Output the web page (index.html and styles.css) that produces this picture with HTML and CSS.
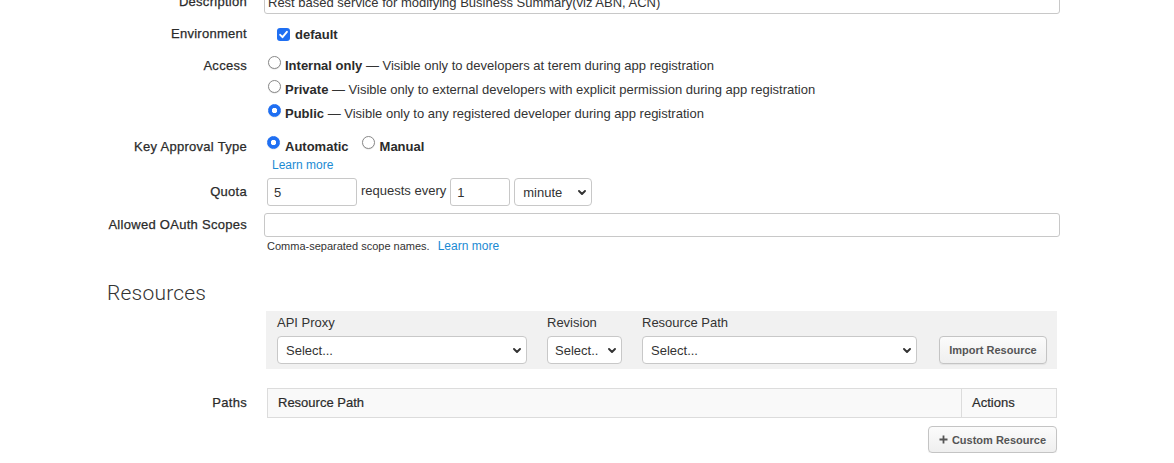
FILE: index.html
```html
<!DOCTYPE html>
<html lang="en">
<head>
<meta charset="utf-8">
<title>Product</title>
<link rel="stylesheet" href="styles.css">
</head>
<body>
<div class="page">
  <div class="field f-desc">
    <div class="label">Description</div>
    <div class="control">
      <input class="text text-wide desc" type="text" value="Rest based service for modifying Business Summary(viz ABN, ACN)">
    </div>
  </div>

  <div class="field f-env">
    <div class="label">Environment</div>
    <div class="control env">
      <span class="check"><svg width="13" height="13" viewBox="0 0 13 13"><path d="M3.2 6.8l2.3 2.4 4.4-5.4" fill="none" stroke="#fff" stroke-width="1.9" stroke-linecap="round" stroke-linejoin="round"/></svg></span>
      <span class="strong">default</span>
    </div>
  </div>

  <div class="field f-access">
    <div class="label">Access</div>
    <div class="control">
      <div class="option"><span class="radio"></span><span><span class="strong">Internal only</span> — Visible only to developers at terem during app registration</span></div>
      <div class="option"><span class="radio"></span><span><span class="strong">Private</span> — Visible only to external developers with explicit permission during app registration</span></div>
      <div class="option"><span class="radio on"></span><span><span class="strong">Public</span> — Visible only to any registered developer during app registration</span></div>
    </div>
  </div>

  <div class="field f-key">
    <div class="label">Key Approval Type</div>
    <div class="control">
      <div class="option-row">
        <div class="option"><span class="radio on"></span><span class="strong">Automatic</span></div>
        <div class="option manual"><span class="radio"></span><span class="strong">Manual</span></div>
      </div>
      <a class="link learn" href="#">Learn more</a>
    </div>
  </div>

  <div class="field f-quota">
    <div class="label">Quota</div>
    <div class="control quota">
      <input class="text q-count" type="text" value="5">
      <span class="q-text">requests every</span>
      <input class="text q-every" type="text" value="1">
      <div class="select q-unit"><span>minute</span><svg class="chev" width="8" height="5" viewBox="0 0 8 5"><path d="M1 1l3 3 3-3" fill="none" stroke="#333" stroke-width="1.9" stroke-linecap="round" stroke-linejoin="round"/></svg></div>
    </div>
  </div>

  <div class="field f-oauth">
    <div class="label">Allowed OAuth Scopes</div>
    <div class="control">
      <input class="text text-wide oauth" type="text" value="">
      <div class="help">Comma-separated scope names. <a class="link" href="#">Learn more</a></div>
    </div>
  </div>

  <h2 class="section-title">Resources</h2>

  <div class="panel">
    <div class="pcol c-proxy">
      <div class="plabel">API Proxy</div>
      <div class="select"><span>Select...</span><svg class="chev" width="8" height="5" viewBox="0 0 8 5"><path d="M1 1l3 3 3-3" fill="none" stroke="#333" stroke-width="1.9" stroke-linecap="round" stroke-linejoin="round"/></svg></div>
    </div>
    <div class="pcol c-rev">
      <div class="plabel">Revision</div>
      <div class="select"><span>Select..</span><svg class="chev" width="8" height="5" viewBox="0 0 8 5"><path d="M1 1l3 3 3-3" fill="none" stroke="#333" stroke-width="1.9" stroke-linecap="round" stroke-linejoin="round"/></svg></div>
    </div>
    <div class="pcol c-path">
      <div class="plabel">Resource Path</div>
      <div class="select"><span>Select...</span><svg class="chev" width="8" height="5" viewBox="0 0 8 5"><path d="M1 1l3 3 3-3" fill="none" stroke="#333" stroke-width="1.9" stroke-linecap="round" stroke-linejoin="round"/></svg></div>
    </div>
    <button class="btn import" type="button">Import Resource</button>
  </div>

  <div class="field f-paths">
    <div class="label">Paths</div>
    <div class="control">
      <div class="table">
        <div class="th th-path">Resource Path</div>
        <div class="th th-actions">Actions</div>
      </div>
      <div class="table-actions">
        <button class="btn custom" type="button"><svg width="9" height="9" viewBox="0 0 9 9"><path d="M4.5 0.5v8M0.5 4.5h8" stroke="#555" stroke-width="1.8"/></svg>Custom Resource</button>
      </div>
    </div>
  </div>
</div>
</body>
</html>
```
FILE: styles.css
```css
* { box-sizing: border-box; }

html, body {
  margin: 0;
  padding: 0;
  background: #fff;
  overflow: hidden;
}

body {
  font-family: "Liberation Sans", Arial, Helvetica, sans-serif;
  font-size: 13px;
  color: #333;
}

.page {
  width: 960px;
  margin: -10px 0 0 100px;
}

.field {
  display: flex;
  align-items: flex-start;
}

.label {
  flex: none;
  width: 164px;
  padding-right: 17px;
  text-align: right;
  line-height: 24px;
  color: #2b2b2b;
  letter-spacing: 0.28px;
  -webkit-text-stroke: 0.25px #2b2b2b;
}

.control {
  flex: 1;
  min-width: 0;
}

.strong {
  font-weight: bold;
  color: #2b2b2b;
}

.text {
  display: block;
  font-family: inherit;
  font-size: 13px;
  color: #333;
  background: #fff;
  border: 1px solid #c8c8c8;
  border-radius: 3px;
  outline: none;
  margin: 0;
}

.text-wide {
  width: 796px;
  height: 24px;
  padding: 0 3px;
}

/* rows */
.f-env { margin-top: 8px; }
.f-access { margin-top: 8px; }
.f-key { margin-top: 9px; }
.f-quota { margin-top: 5px; }
.f-quota .label { line-height: 28px; }
.f-oauth { margin-top: 7px; }
.f-paths { margin-top: 19px; }
.f-paths .label { line-height: 30px; }

.env {
  display: flex;
  align-items: center;
  height: 24px;
}

.check {
  display: flex;
  width: 13px;
  height: 13px;
  margin-left: 13px;
  margin-right: 5px;
  background: #1f6ff2;
  border-radius: 3px;
}

.option {
  display: flex;
  align-items: flex-start;
  line-height: 24px;
}

.radio {
  flex: none;
  width: 13px;
  height: 13px;
  margin: 2px 4px 0 4px;
  border-radius: 50%;
  border: 1px solid #8a8a8a;
  background: #fff;
  box-shadow: 0 0.5px 1px rgba(0, 0, 0, 0.15);
}

.radio.on {
  border-color: #1f6ff2;
  background: radial-gradient(circle, #fff 0 2.4px, #1f6ff2 3px);
}

.f-key .radio { margin-top: 1px; }
.f-key .radio.on { margin-left: 3px; margin-right: 5px; }

.option-row {
  display: flex;
}

.manual {
  margin-left: 9px;
}

.manual .radio { margin-right: 5px; }

.link {
  color: #1b8ad3;
  text-decoration: none;
  font-size: 12px;
}

.learn {
  display: block;
  margin: -1px 0 0 8px;
  line-height: 15px;
  width: max-content;
}

.quota {
  display: flex;
  align-items: center;
}

.q-count {
  width: 90px;
  height: 28px;
  margin-left: 3px;
  padding: 0 6px;
}

.q-text {
  margin: 0 4px 4px 4px;
}

.q-every {
  width: 60px;
  height: 28px;
  padding: 0 6px;
}

.select {
  display: flex;
  align-items: center;
  justify-content: space-between;
  height: 28px;
  padding: 0 5px 0 8px;
  background: #fff;
  border: 1px solid #c8c8c8;
  border-radius: 4px;
  color: #333;
  white-space: nowrap;
  overflow: hidden;
}

.chev { flex: none; }

.q-unit {
  width: 78px;
  margin-left: 4px;
}

.help {
  margin: 2px 0 0 3px;
  font-size: 11px;
  line-height: 14px;
  color: #333;
}

.help .link { margin-left: 5px; }

.section-title {
  margin: 28px 0 0 7px;
  font-family: Roboto, "Liberation Sans", Arial, sans-serif;
  font-weight: 300;
  font-size: 21px;
  letter-spacing: 0.2px;
  line-height: 24px;
  color: #333;
}

.panel {
  display: flex;
  align-items: flex-end;
  width: 791px;
  margin: 6px 0 0 166px;
  padding: 4px 10px 5px 11px;
  background: #f1f1f1;
}

.pcol { flex: none; }
.plabel {
  line-height: 16px;
  margin-bottom: 5px;
  color: #333;
}

.c-proxy { width: 250px; }
.c-rev { width: 75px; margin-left: 20px; }
.c-path { width: 275px; margin-left: 20px; }
.c-rev .select { padding-left: 7px; }

.btn {
  display: flex;
  align-items: center;
  justify-content: center;
  gap: 4px;
  font-family: "Liberation Sans", Arial, Helvetica, sans-serif;
  font-size: 11px;
  font-weight: bold;
  color: #555;
  background: linear-gradient(#fbfbfb, #efefef);
  border: 1px solid #c4c4c4;
  border-radius: 4px;
  box-shadow: 0 1px 1px rgba(0, 0, 0, 0.06);
  padding: 0;
  margin: 0;
}

.import {
  flex: none;
  width: 108px;
  height: 28px;
  margin-left: 22px;
}

.table {
  display: flex;
  width: 790px;
  height: 30px;
  margin-left: 3px;
  border: 1px solid #dcdcdc;
  background: #f9f9f9;
}

.th {
  line-height: 28px;
  padding-left: 10px;
  color: #2b2b2b;
  -webkit-text-stroke: 0.2px #2b2b2b;
}

.th-path { flex: 1; }
.th-actions {
  flex: none;
  width: 95px;
  border-left: 1px solid #dcdcdc;
}

.table-actions {
  display: flex;
  justify-content: flex-end;
  width: 790px;
  margin: 8px 0 0 3px;
}

.custom {
  width: 129px;
  height: 27px;
}
```
